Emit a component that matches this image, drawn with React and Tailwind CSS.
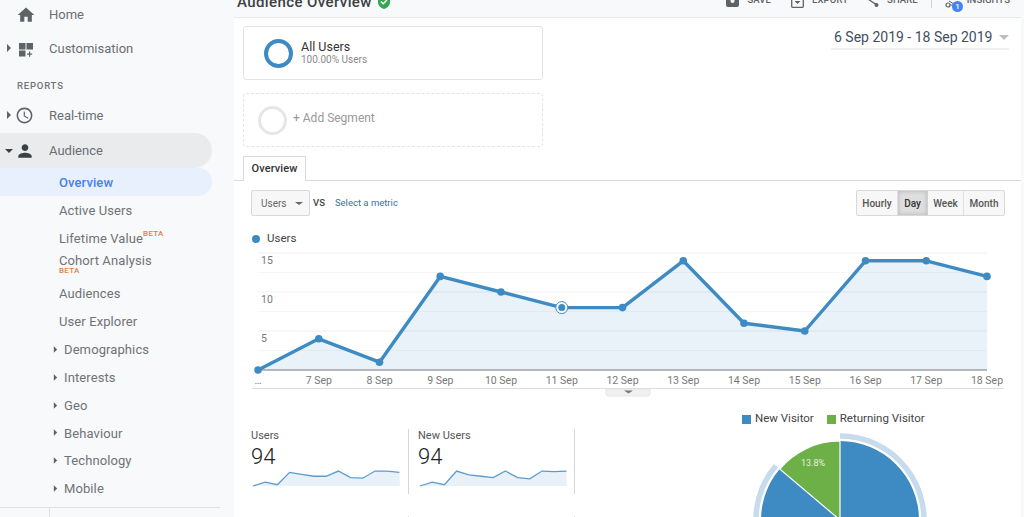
import { MdHome, MdPerson, MdAccessTime } from "react-icons/md";

const vals = [0, 4, 1, 12, 10, 8, 8, 14, 6, 5, 14, 14, 12];
const labels = ["…", "7 Sep", "8 Sep", "9 Sep", "10 Sep", "11 Sep", "12 Sep", "13 Sep", "14 Sep", "15 Sep", "16 Sep", "17 Sep", "18 Sep"];
const pts = vals.map((v, i) => [258 + i * 60.75, 370 - v * 7.8]);
const linePts = pts.map(p => p.join(",")).join(" ");

const Tri = ({ className }) => (
  <svg viewBox="0 0 6 8" className={className}><path d="M1 0l4 4-4 4z" fill="currentColor" /></svg>
);

const TopItem = ({ icon, label }) => (
  <div className="flex items-end gap-[8px] text-[9.5px] font-medium tracking-[0.1px] text-[#5f6368] leading-none">
    {icon}
    <span className="mb-[13px]">{label}</span>
  </div>
);

const NavRow = ({ icon, label, arrow, down, className = "" }) => (
  <div className={`relative flex items-center h-[35px] text-[13px] text-[#6b6f73] ${className}`}>
    {arrow && <Tri className="absolute left-[6px] top-[13px] w-[6px] h-[8px] text-[#5f6368]" />}
    {down && <div className="absolute left-[5px] top-[16px] w-0 h-0 border-x-[4px] border-x-transparent border-t-[4px] border-t-[#3c4043]" />}
    <div className="w-[49px] pl-[16px] flex items-center text-[#5f6368]">{icon}</div>
    <span>{label}</span>
  </div>
);

const SubRow = ({ label, beta, className = "" }) => (
  <div className={`flex items-center h-[28px] pl-[59px] text-[13px] tracking-[0.1px] text-[#6f7377] ${className}`}>
    {label}
    {beta && <span className="self-start mt-[2px] text-[8px] font-medium tracking-[0.3px] text-[#e37e3c]">BETA</span>}
  </div>
);

const TreeRow = ({ label }) => (
  <div className="relative flex items-center h-[27.8px] pl-[64px] text-[13px] tracking-[0.1px] text-[#6f7377]">
    <Tri className="absolute left-[53px] top-[10px] w-[5px] h-[7px] text-[#5f6368]" />
    {label}
  </div>
);

const Spark = ({ data }) => {
  const p = data.map((v, i) => [1 + i * 12.2, 26 - v * 1.3]);
  const line = p.map(q => q.join(",")).join(" ");
  return (
    <svg width="150" height="28" viewBox="0 0 150 28" className="block">
      <polygon points={`1,26 ${line} 148,26`} fill="#e9f1f8" />
      <polyline points={line} fill="none" stroke="#5b9bd0" strokeWidth="1.3" />
    </svg>
  );
};

const Stat = ({ label, value, data, className = "" }) => (
  <div className={`h-[65px] border-r border-[#d4d6d8] ${className}`}>
    <div className="text-[11px] leading-[13px] text-[#555]">{label}</div>
    <div className="text-[22px] font-light leading-[26px] mt-[2px] text-[#222]">{value}</div>
    <div className="mt-[-10px] ml-[1px]"><Spark data={data} /></div>
  </div>
);

export default function App() {
  return (
    <div className="flex h-[517px] w-[1024px] overflow-hidden bg-white font-['Roboto',sans-serif]">
      {/* sidebar */}
      <aside className="relative w-[234px] shrink-0 bg-[#f8f9fa] overflow-hidden">
        <div className="mt-[-3px]">
          <NavRow label="Home" icon={<MdHome size={20} />} />
          <NavRow label="Customisation" arrow className="mt-[-1px]" icon={
            <svg width="16" height="16" viewBox="0 0 16 16" fill="currentColor" className="ml-[3px]">
              <rect x="0" y="2" width="6.5" height="6.5" /><rect x="7.5" y="2" width="6.5" height="6.5" /><rect x="0" y="9.5" width="6.5" height="6" />
              <path d="M10 10.5h1.2v2h2v1.2h-2v2H10v-2H8v-1.2h2z" />
            </svg>
          } />
          <div className="h-[32px] pt-[12px] pl-[17px] text-[9.5px] font-medium tracking-[0.8px] text-[#6f7377] leading-[16px]">REPORTS</div>
          <NavRow label="Real-time" arrow icon={<MdAccessTime size={19} className="ml-[-1px]" />} />
          <NavRow label="Audience" down className="w-[212px] rounded-r-full bg-[#eaebed]" icon={<MdPerson size={20} className="ml-[-1px] text-[#3c4043]" />} />
          <div className="flex items-center h-[28px] w-[212px] pl-[59px] pt-[2px] rounded-r-full bg-[#e8f0fe] text-[13px] font-medium tracking-[0.1px] text-[#4a80e8]">Overview</div>
          <SubRow label="Active Users" className="pt-[2px]" />
          <SubRow label="Lifetime Value" beta className="pt-[2px]" />
          <div className="h-[22px] pl-[59px] pt-[2px] text-[13px] leading-[13px] tracking-[0.1px] text-[#6f7377]">
            Cohort Analysis
            <div className="text-[8px] leading-[8px] font-medium tracking-[0.3px] text-[#e37e3c]">BETA</div>
          </div>
          <div className="h-[6px]" />
          <SubRow label="Audiences" />
          <SubRow label="User Explorer" />
          {["Demographics", "Interests", "Geo", "Behaviour", "Technology", "Mobile"].map(l => <TreeRow key={l} label={l} />)}
        </div>
        <div className="absolute left-0 right-[14px] top-[507px] border-t border-[#dfe1e3]" />
        <div className="absolute left-[49px] top-[507px] h-[10px] border-l border-[#dfe1e3]" />
      </aside>

      {/* main */}
      <main className="flex-1 min-w-0 border-r-[3px] border-[#f8f9fa]">
        <header className="h-[18px] bg-[#f8f9fa] border-b border-[#e6e8ea] flex items-end justify-between pl-[3px] pr-[11px] overflow-hidden">
          <div className="flex items-center gap-[6px] mb-[6px] text-[15px] font-medium leading-[18px] tracking-[0.4px] text-[#3c4043] whitespace-nowrap">
            Audience Overview
            <svg width="12" height="14" viewBox="0 0 12 14"><path d="M6 0l6 2v5c0 3.400-2.600 6-6 7-3.400-1-6-3.600-6-7V2z" fill="#34a853" /><path d="M3 6.500l2.200 2.200L9 5" fill="none" stroke="#fff" strokeWidth="1.500" /></svg>
          </div>
          <div className="flex h-[18px] items-end">
            <TopItem label="SAVE" icon={<svg width="13" height="8" viewBox="0 0 13 8" className="mb-[10px]"><path d="M0 0h13v6a2 2 0 01-2 2H2a2 2 0 01-2-2z" fill="#5f6368" /><circle cx="6.500" cy="2" r="2" fill="#f8f9fa" /></svg>} />
            <div className="w-[20px]" />
            <TopItem label="EXPORT" icon={<svg width="13" height="9" viewBox="0 0 13 9" className="mb-[9px]"><path d="M.7 0v7.500a.8.800 0 00.8.800h10a.8.800 0 00.8-.8V0" fill="none" stroke="#5f6368" strokeWidth="1.300" /><path d="M6.500 5L3.500 2h6z" fill="#5f6368" /></svg>} />
            <div className="w-[18px]" />
            <TopItem label="SHARE" icon={<svg width="13" height="9" viewBox="0 0 13 9" className="mb-[9px]"><path d="M2 0l8 5.500" stroke="#5f6368" strokeWidth="1.300" /><circle cx="10.500" cy="6" r="2" fill="#5f6368" /></svg>} />
            <div className="w-px h-[9px] bg-[#d0d3d6] mb-[9px] mx-[13px]" />
            <div className="flex items-end gap-[8px] text-[9.5px] font-medium tracking-[0.1px] text-[#5f6368] leading-none">
              <svg width="14" height="9" viewBox="0 0 14 9" className="mb-[9px]"><circle cx="3" cy="6" r="2" fill="none" stroke="#5f6368" strokeWidth="1.200" /><path d="M5 6h5M4 2l5 3" stroke="#5f6368" /></svg>
              <span className="mb-[13px]">INSIGHTS</span>
            </div>
          </div>
        </header>

        <div className="relative">
          {/* insights badge */}
          <div className="absolute left-[718px] top-[-17px] w-[11px] h-[11px] rounded-full bg-[#4285f4] text-white text-[8px] font-medium leading-[11px] text-center">1</div>
        </div>

        <section className="flex justify-between h-[138px] pl-[9px] pr-[12px] pt-[8px]">
          <div className="w-[300px]">
            <div className="h-[54px] flex items-center pl-[20px] gap-[8px] border border-[#e2e4e6] rounded-[3px]">
              <div className="w-[29px] h-[29px] rounded-full border-[4px] border-[#3e8bc4]" />
              <div>
                <div className="text-[12.5px] leading-[14px] text-[#333]">All Users</div>
                <div className="text-[10px] leading-[12px] text-[#8a8a8a]">100.00% Users</div>
              </div>
            </div>
            <div className="h-[54px] mt-[13px] flex items-center pl-[14px] gap-[6px] border border-dashed border-[#e2e4e6] rounded-[3px]">
              <div className="w-[29px] h-[29px] rounded-full border-[3px] border-[#e6e6e6]" />
              <div className="text-[12px] mt-[-4px] text-[#999]">+ Add Segment</div>
            </div>
          </div>
          <div className="flex items-start h-[23px] mt-[1px] w-[178px] border-b-2 border-[#eff0f1] pl-[3px] text-[14px] leading-[20px] whitespace-nowrap text-[#414e5e]">
            6 Sep 2019 - 18 Sep 2019
            <div className="ml-[7px] mt-[8px] w-0 h-0 border-x-[5px] border-x-transparent border-t-[5px] border-t-[#bdbdbd]" />
          </div>
        </section>

        <div className="h-[25px] border-b border-[#d9dbdd] pl-[9px]">
          <div className="h-[25px] w-[63px] pt-[1px] flex items-center justify-center bg-white border border-b-0 border-[#d9dbdd] text-[11px] font-medium text-[#333] tracking-[0.1px]">Overview</div>
        </div>

        <div className="flex items-center justify-between h-[26px] mt-[9px] pl-[17px] pr-[16px]">
          <div className="flex items-center">
            <div className="flex items-center w-[59px] h-[26px] pl-[9px] rounded-[2px] border border-[#d8d8d8] bg-[#f7f7f7] text-[10px] text-[#666]">
              Users
              <div className="ml-[8px] w-0 h-0 border-x-[4px] border-x-transparent border-t-[3px] border-t-[#666]" />
            </div>
            <div className="ml-[3px] text-[9.5px] font-medium text-[#444]">VS</div>
            <div className="ml-[10px] text-[9.5px] text-[#3b6fa8]">Select a metric</div>
          </div>
          <div className="flex h-[26px] rounded-[2px] border border-[#d8d8d8] bg-[#f7f7f7] text-[10px] font-medium text-[#555]">
            <div className="w-[41px] flex items-center justify-center border-r border-[#e0e0e0]">Hourly</div>
            <div className="w-[30px] flex items-center justify-center border-r border-[#d0d0d0] bg-[#dedede] text-[#333] shadow-[inset_0_0_4px_rgba(0,0,0,0.2)]">Day</div>
            <div className="w-[36px] flex items-center justify-center border-r border-[#e0e0e0]">Week</div>
            <div className="w-[40px] flex items-center justify-center">Month</div>
          </div>
        </div>

        <div className="flex items-center h-[14px] mt-[16px] pl-[18px] gap-[7px] text-[11.5px] text-[#444]">
          <div className="w-[8px] h-[8px] rounded-full bg-[#3e8bc4]" />
          Users
        </div>

        {/* main chart */}
        <svg width="787" height="150" viewBox="234 247 787 150" className="block mt-[1px]">
          {[253, 272.500, 292, 311.500, 331, 350.500].map(y => (
            <line key={y} x1="258" x2="987" y1={y} y2={y} stroke={y === 292 || y === 331 || y === 253 ? "#efefef" : "#f6f6f6"} />
          ))}
          <polygon points={`258,370 ${linePts} 987,370`} fill="#3e8bc4" fillOpacity="0.11" />
          <line x1="258" x2="987" y1="370" y2="370" stroke="#777" strokeWidth="1" />
          <polyline points={linePts} fill="none" stroke="#3e8bc4" strokeWidth="3.400" strokeLinejoin="round" />
          {pts.map(([x, y], i) => (
            <g key={i}>
              {i === 5 && <circle cx={x} cy={y} r="6" fill="#fff" stroke="#3e8bc4" strokeWidth="1" />}
              <circle cx={x} cy={y} r={i === 5 ? 3.500 : 3.800} fill="#3e8bc4" />
            </g>
          ))}
          {[["15", 264], ["10", 303], ["5", 342]].map(([t, y]) => (
            <text key={t} x="261" y={y} fontSize="10.500" fill="#777">{t}</text>
          ))}
          {labels.map((t, i) => (
            <text key={t} x={pts[i][0]} y="384" fontSize="10.500" fill="#777" textAnchor="middle">{t}</text>
          ))}
          <line x1="252" x2="1004" y1="388.500" y2="388.500" stroke="#dcdcdc" />
          <path d="M606 389h44v5a2 2 0 01-2 2h-40a2 2 0 01-2-2z" fill="#f0f0f0" stroke="#e2e2e2" strokeWidth="0.800" />
          <path d="M624 390.500h9l-4.500 3z" fill="#777" />
        </svg>

        <section className="flex h-[120px]">
          <div className="w-[341px] pl-[17px] pt-[32px]">
            <div className="flex">
              <Stat label="Users" value="94" className="w-[158px]" data={[0, 3, 1, 10.500, 9, 7.500, 7.500, 11.500, 6.500, 6, 11.500, 11.500, 10.500]} />
              <Stat label="New Users" value="94" className="w-[166px] pl-[9px]" data={[0, 3, 1, 11.500, 8.500, 7.500, 6.500, 11.500, 6.500, 5.500, 11.500, 11, 11.500]} />
            </div>
            <div className="flex mt-[22px]">
              <div className="w-[158px] h-[4px] border-r border-[#d4d6d8]" />
              <div className="w-[166px] h-[4px] border-r border-[#d4d6d8]" />
            </div>
          </div>
          <div className="flex-1 pl-[167px]">
            <div className="flex items-center h-[14px] mt-[15px] text-[11.5px] text-[#444]">
              <div className="w-[9px] h-[9px] bg-[#3e8bc4] mr-[4px]" />New Visitor
              <div className="w-[9px] h-[9px] bg-[#6db048] ml-[13px] mr-[4px]" />Returning Visitor
            </div>
            <svg width="180" height="91" viewBox="750 426 180 91" className="block ml-[8px]">
              <circle cx="840" cy="520" r="79" fill="#3e8bc4" />
              <path d="M840 520L840 441A79 79 0 0 0 779.700 469z" fill="#6db048" stroke="#fff" strokeWidth="1.200" />
              <path d="M840 436A84 84 0 1 1 775.900 465.700" fill="none" stroke="#c6dcee" strokeWidth="5.500" />
              <text x="813" y="466" fontSize="9" fill="#e4f0da" textAnchor="middle">13.8%</text>
            </svg>
          </div>
        </section>
      </main>
    </div>
  );
}
